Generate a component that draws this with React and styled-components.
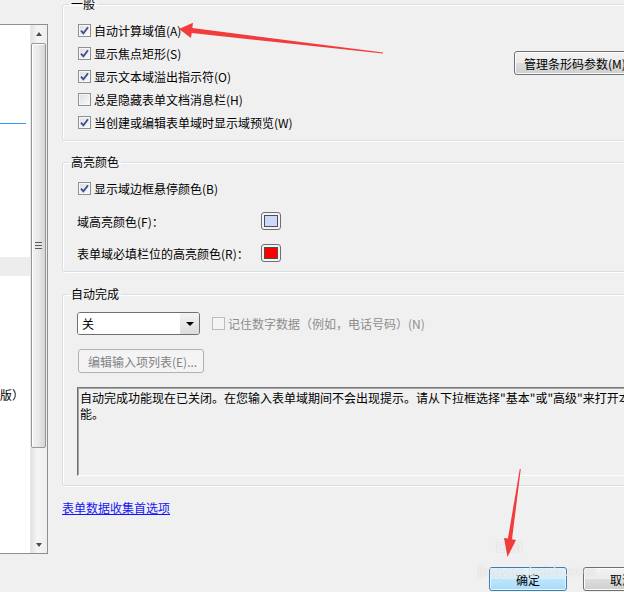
import React from "react"
import styled, {createGlobalStyle} from "styled-components"

const GlobalStyle = createGlobalStyle`
	html, body {
		margin: 0;
		padding: 0;
		background: #f0f0f0;
	}
	body {
		width: 624px;
		height: 592px;
		overflow: hidden;
		font-family: "Noto Sans CJK SC", "Microsoft YaHei", sans-serif;
		font-size: 12px;
		color: #000;
	}
`

const Page = styled.div`
	position: relative;
	display: flex;
	width: 624px;
	height: 592px;
	overflow: hidden;
`

// left list (cut off by the window)
const ListPane = styled.div`
	box-sizing: border-box;
	flex: none;
	width: 48px;
	height: 530px;
	margin-top: 24px;
	border: 1px solid #8e8f8f;
	border-left: none;
	background: #fff;
	display: flex;
`
const ListBody = styled.div`
	flex: 1;
	display: flex;
	flex-direction: column;
	overflow: hidden;
`
const ListGap = styled.div`
	flex: none;
	height: ${p => p.$h}px;
`
const BlueRule = styled.div`
	height: 1px;
	width: 26px;
	background: #3399ff;
`
const HoverRow = styled.div`
	height: 19px;
	width: 30px;
	background: #ededed;
`
const ListText = styled.div`
	line-height: 17px;
	white-space: nowrap;
`
const ScrollBar = styled.div`
	flex: none;
	width: 16px;
	display: flex;
	flex-direction: column;
	background: linear-gradient(to right, #e3e3e3, #f5f5f5 40%, #eeeeee);
	border-left: 1px solid #e8e8e8;
`
const ScrollBtn = styled.div`
	height: 17px;
	display: flex;
	align-items: center;
	justify-content: center;
	&::after {
		content: "";
		border-left: 3.5px solid transparent;
		border-right: 3.5px solid transparent;
		${p => p.$down ? "border-top: 4px solid #4d4d4d;" : "border-bottom: 4px solid #4d4d4d;"}
	}
`
const Track = styled.div`
	flex: 1;
	padding-top: 1px;
`
const Thumb = styled.div`
	box-sizing: border-box;
	height: 405px;
	margin: 0 1px 0 0;
	border: 1px solid #979797;
	border-radius: 2px;
	background: linear-gradient(to right, #f3f3f3, #e8e8e8 50%, #d6d6d6);
	box-shadow: inset 1px 1px 0 #fff;
	display: flex;
	align-items: center;
	justify-content: center;
`
const Grip = styled.div`
	width: 7px;
	height: 7px;
	background: repeating-linear-gradient(#5a5a5a 0 1px, #e8e8e8 1px 3px);
`

// main settings column
const Main = styled.div`
	flex: none;
	width: 620px;
	margin-left: 14px;
	display: flex;
	flex-direction: column;
`
const Group = styled.fieldset`
	margin: ${p => p.$top}px 0 0 0;
	padding: ${p => p.$pt}px 0 ${p => p.$pb}px 15px;
	border: 1px solid #d5dfe5;
	border-radius: 3px;
	box-shadow: inset 1px 1px 0 #fff, 1px 1px 0 #fff;
	min-width: 0;
`
const Legend = styled.legend`
	padding: 0 2px;
	margin-left: -9px;
	line-height: 14px;
`
const GeneralBody = styled.div`
	display: flex;
	align-items: flex-start;
`
const CheckList = styled.div`
	width: 436px;
	display: flex;
	flex-direction: column;
`
const CheckRow = styled.label`
	display: flex;
	align-items: center;
	gap: 3px;
	height: 23px;
	white-space: nowrap;
	color: ${p => p.$disabled ? "#8d8d8d" : "#000"};
`
const Box = styled.span`
	box-sizing: border-box;
	flex: none;
	width: 13px;
	height: 13px;
	border: 1px solid ${p => p.$disabled ? "#bcbcbc" : "#8e8f8f"};
	background: ${p => p.$disabled ? "#f4f4f4" : "linear-gradient(135deg, #dedede, #fbfbfb)"};
	box-shadow: inset 0 0 0 1px ${p => p.$disabled ? "#f4f4f4" : "#f7f7f7"};
	display: flex;
	align-items: center;
	justify-content: center;
`
const WinButton = styled.button`
	box-sizing: border-box;
	height: 24px;
	flex: none;
	padding: 0 ${p => p.$pad || 9}px;
	min-width: ${p => p.$w || 0}px;
	font: inherit;
	white-space: nowrap;
	border: 1px solid #707070;
	border-radius: 3px;
	color: #000;
	background: linear-gradient(#f2f2f2, #ebebeb 50%, #dddddd 50%, #cfcfcf);
	box-shadow: inset 0 0 0 1px #fcfcfc;
`
const ManageButton = styled(WinButton)`
	margin-top: 32px;
`
const DisabledButton = styled(WinButton)`
	margin-top: 14px;
	width: 126px;
	align-self: flex-start;
	border-color: #adb2b5;
	color: #838383;
	background: #f4f4f4;
	box-shadow: none;
`
const DefaultButton = styled(WinButton)`
	border-color: #3c7fb1;
	background: linear-gradient(#e3f4fc, #d6eefb 50%, #bee6fd 50%, #a9dbf6);
	box-shadow: inset 0 0 0 1px #e8f6fd;
`
const ColorRows = styled.div`
	margin-top: 5px;
`
const ColorRow = styled.div`
	display: grid;
	grid-template-columns: 184px auto;
	align-items: center;
	height: 32px;
	margin-left: -1px;
	justify-content: start;
`
const Swatch = styled.span`
	box-sizing: border-box;
	width: 20px;
	height: 18px;
	padding: 2px;
	border: 1px solid #707070;
	border-radius: 3px;
	background: #f4f4f4;
	display: flex;
	&::after {
		content: "";
		flex: 1;
		background: ${p => p.$color};
		border: 1px solid #4f4f4f;
	}
`
const AutoBody = styled.div`
	display: flex;
	flex-direction: column;
`
const SelectRow = styled.div`
	display: flex;
	align-items: center;
	gap: 12px;
`
const Select = styled.div`
	box-sizing: border-box;
	width: 123px;
	height: 23px;
	margin-left: -1px;
	border: 1px solid #707070;
	border-radius: 3px;
	display: flex;
	overflow: hidden;
`
const SelectText = styled.div`
	flex: 1;
	padding-left: 4px;
	line-height: 21px;
	background: #fff;
`
const SelectArrow = styled.div`
	width: 19px;
	background: linear-gradient(#f4f4f4, #dcdcdc);
	display: flex;
	align-items: center;
	justify-content: center;
	&::after {
		content: "";
		border-left: 4px solid transparent;
		border-right: 4px solid transparent;
		border-top: 4px solid #000;
	}
`
const ReadOnlyBox = styled.div`
	box-sizing: border-box;
	width: 600px;
	height: 89px;
	margin: 14px 0 0 -1px;
	padding: 2px 2px;
	line-height: 16px;
	white-space: nowrap;
	overflow: hidden;
	border-top: 1px solid #7a7a7a;
	border-left: 1px solid #6e6e6e;
	border-right: 1px solid #fff;
	border-bottom: 1px solid #fff;
	box-shadow: inset 1px 1px 0 #a5a5a5;
	background: #f0f0f0;
`
const PrefLink = styled.a`
	margin-top: 13px;
	align-self: flex-start;
	line-height: 17px;
	color: #1515f5;
	text-decoration: underline;
	cursor: pointer;
`
const Footer = styled.div`
	margin-top: auto;
	padding: 0 0 1px 427px;
	display: flex;
	gap: 16px;
`

// overlays: red annotation arrows and the site watermark
const Annotations = styled.svg`
	position: absolute;
	left: 0;
	top: 0;
	pointer-events: none;
`
const Watermark = styled.div`
	position: absolute;
	left: 478px;
	top: 538px;
	font-family: "Liberation Sans", Arial, sans-serif;
	color: rgba(255, 255, 255, 0.75);
	text-shadow: 0 0 1px rgba(150, 150, 150, 0.5);
	pointer-events: none;
`
const WmLogo = styled.div`
	margin-left: 18px;
	font-size: 17px;
	font-weight: bold;
	line-height: 18px;
`
const WmSite = styled.div`
	margin-top: 8px;
	font-size: 14px;
	line-height: 14px;
	letter-spacing: 0.3px;
`

function Check({checked, disabled}) {
	return (
		<Box $disabled={disabled}>
			{checked && (
				<svg width="11" height="11" viewBox="0 0 11 11">
					<path d="M2 5.6 L4.4 8.4 L9 2.2" fill="none" stroke="#3b4d8e" strokeWidth="1.8" />
				</svg>
			)}
		</Box>
	)
}

const generalOpts = [
	{label: "自动计算域值(A)", on: true},
	{label: "显示焦点矩形(S)", on: true},
	{label: "显示文本域溢出指示符(O)", on: true},
	{label: "总是隐藏表单文档消息栏(H)", on: false},
	{label: "当创建或编辑表单域时显示域预览(W)", on: true},
]

export default function App() {
	return (
		<>
			<GlobalStyle />
			<Page>
				<ListPane>
					<ListBody>
						<ListGap $h={98} />
						<BlueRule />
						<ListGap $h={133} />
						<HoverRow />
						<ListGap $h={110} />
						<ListText>版）</ListText>
					</ListBody>
					<ScrollBar>
						<ScrollBtn />
						<Track>
							<Thumb><Grip /></Thumb>
						</Track>
						<ScrollBtn $down />
					</ScrollBar>
				</ListPane>

				<Main>
					<Group $top={-3} $pt={8} $pb={6}>
						<Legend>一般</Legend>
						<GeneralBody>
							<CheckList>
								{generalOpts.map(o => (
									<CheckRow key={o.label}>
										<Check checked={o.on} />
										{o.label}
									</CheckRow>
								))}
							</CheckList>
							<ManageButton $pad={9}>管理条形码参数(M)...</ManageButton>
						</GeneralBody>
					</Group>

					<Group $top={14} $pt={8} $pb={2}>
						<Legend>高亮颜色</Legend>
						<CheckRow>
							<Check checked />
							显示域边框悬停颜色(B)
						</CheckRow>
						<ColorRows>
							<ColorRow>
								<span>域高亮颜色(F)：</span>
								<Swatch $color="#cad8fc" />
							</ColorRow>
							<ColorRow>
								<span>表单域必填栏位的高亮颜色(R)：</span>
								<Swatch $color="#ff0000" />
							</ColorRow>
						</ColorRows>
					</Group>

					<Group $top={15} $pt={11} $pb={9}>
						<Legend>自动完成</Legend>
						<AutoBody>
							<SelectRow>
								<Select>
									<SelectText>关</SelectText>
									<SelectArrow />
								</Select>
								<CheckRow $disabled>
									<Check disabled />
									记住数字数据（例如，电话号码）(N)
								</CheckRow>
							</SelectRow>
							<DisabledButton>编辑输入项列表(E)...</DisabledButton>
							<ReadOnlyBox>
								自动完成功能现在已关闭。在您输入表单域期间不会出现提示。请从下拉框选择"基本"或"高级"来打开本功
								<br />
								能。
							</ReadOnlyBox>
						</AutoBody>
					</Group>

					<PrefLink>表单数据收集首选项</PrefLink>

					<Footer>
						<DefaultButton $w={78}>确定</DefaultButton>
						<WinButton $w={78}>取消</WinButton>
					</Footer>
				</Main>

				<Watermark>
					<WmLogo>Bai</WmLogo>
					<WmSite>jingyan.baidu.com</WmSite>
				</Watermark>

				<Annotations width="624" height="592" viewBox="0 0 624 592">
					<polygon
						fill="#f23b3b"
						points="179,29 193,22.8 192.3,28 383,52.6 383,53.6 191.7,33 191,38"
					/>
					<polygon
						fill="#f23b3b"
						points="507.5,557 504,538 507.9,538.6 519.8,469 520.8,469 512,539.3 516,540"
					/>
				</Annotations>
			</Page>
		</>
	)
}
